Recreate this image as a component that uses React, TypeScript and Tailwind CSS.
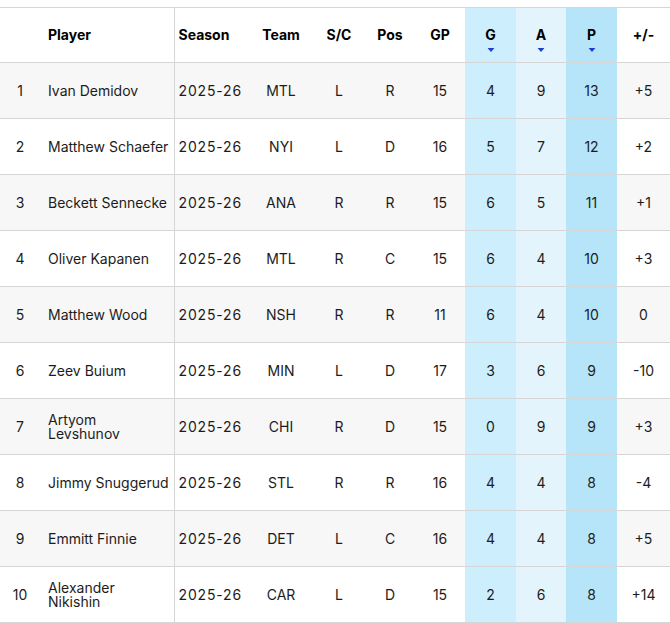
import React from "react";

type Row = {
  rank: number;
  name: string;
  team: string;
  sc: string;
  pos: string;
  gp: number;
  g: number;
  a: number;
  p: number;
  pm: string;
};

const rows: Row[] = [
  { rank: 1, name: "Ivan Demidov", team: "MTL", sc: "L", pos: "R", gp: 15, g: 4, a: 9, p: 13, pm: "+5" },
  { rank: 2, name: "Matthew Schaefer", team: "NYI", sc: "L", pos: "D", gp: 16, g: 5, a: 7, p: 12, pm: "+2" },
  { rank: 3, name: "Beckett Sennecke", team: "ANA", sc: "R", pos: "R", gp: 15, g: 6, a: 5, p: 11, pm: "+1" },
  { rank: 4, name: "Oliver Kapanen", team: "MTL", sc: "R", pos: "C", gp: 15, g: 6, a: 4, p: 10, pm: "+3" },
  { rank: 5, name: "Matthew Wood", team: "NSH", sc: "R", pos: "R", gp: 11, g: 6, a: 4, p: 10, pm: "0" },
  { rank: 6, name: "Zeev Buium", team: "MIN", sc: "L", pos: "D", gp: 17, g: 3, a: 6, p: 9, pm: "-10" },
  { rank: 7, name: "Artyom\nLevshunov", team: "CHI", sc: "R", pos: "D", gp: 15, g: 0, a: 9, p: 9, pm: "+3" },
  { rank: 8, name: "Jimmy Snuggerud", team: "STL", sc: "R", pos: "R", gp: 16, g: 4, a: 4, p: 8, pm: "-4" },
  { rank: 9, name: "Emmitt Finnie", team: "DET", sc: "L", pos: "C", gp: 16, g: 4, a: 4, p: 8, pm: "+5" },
  { rank: 10, name: "Alexander\nNikishin", team: "CAR", sc: "L", pos: "D", gp: 15, g: 2, a: 6, p: 8, pm: "+14" },
];

function Arrow() {
  return (
    <svg
      width="7"
      height="4"
      viewBox="0 0 7 4"
      className="absolute left-1/2 top-[40px] -translate-x-1/2"
    >
      <path d="M0 0 L7 0 L3.5 4 Z" fill="#1d3fd1" />
    </svg>
  );
}

export default function App() {
  return (
    <div
      className="w-[670px] h-[623px] bg-white pt-[7px] overflow-hidden text-[#1c1c1c]"
      style={{ fontFamily: "Inter, 'Liberation Sans', sans-serif" }}
    >
      <table className="border-collapse table-fixed w-[670px] text-[14px] leading-[16px]">
        <colgroup>
          <col className="w-[40px]" />
          <col className="w-[134px]" />
          <col className="w-[75px]" />
          <col className="w-[64px]" />
          <col className="w-[52px]" />
          <col className="w-[50px]" />
          <col className="w-[50px]" />
          <col className="w-[51px]" />
          <col className="w-[50px]" />
          <col className="w-[51px]" />
          <col className="w-[53px]" />
        </colgroup>
        <thead>
          <tr className="h-[55px] border-y border-[#d6d6d6] font-bold text-black">
            <th></th>
            <th className="text-left pl-[8px] border-r border-[#d6d6d6]">Player</th>
            <th className="text-left pl-[4px]">Season</th>
            <th className="text-center">Team</th>
            <th className="text-center">S/C</th>
            <th className="text-center">Pos</th>
            <th className="text-center">GP</th>
            <th className="text-center relative bg-[#cdeefd]">
              G
              <Arrow />
            </th>
            <th className="text-center relative bg-[#e3f4fd]">
              A
              <Arrow />
            </th>
            <th className="text-center relative bg-[#b6e5fa]">
              P
              <Arrow />
            </th>
            <th className="text-center">+/-</th>
          </tr>
        </thead>
        <tbody>
          {rows.map((r, i) => (
            <tr
              key={r.rank}
              className={`h-[56px] border-b border-[#d6d6d6] ${i % 2 === 0 ? "bg-[#f7f7f7]" : "bg-white"}`}
            >
              <td className="text-center">{r.rank}</td>
              <td className="pl-[8px] pr-0 border-r border-[#d6d6d6] leading-[14px] whitespace-pre">{r.name}</td>
              <td className="pl-[4px] tracking-[0.06em] whitespace-nowrap">2025-26</td>
              <td className="text-center">{r.team}</td>
              <td className="text-center">{r.sc}</td>
              <td className="text-center">{r.pos}</td>
              <td className="text-center">{r.gp}</td>
              <td className="text-center bg-[#cdeefd]">{r.g}</td>
              <td className="text-center bg-[#e3f4fd]">{r.a}</td>
              <td className="text-center bg-[#b6e5fa]">{r.p}</td>
              <td className="text-center">{r.pm}</td>
            </tr>
          ))}
        </tbody>
      </table>
    </div>
  );
}
